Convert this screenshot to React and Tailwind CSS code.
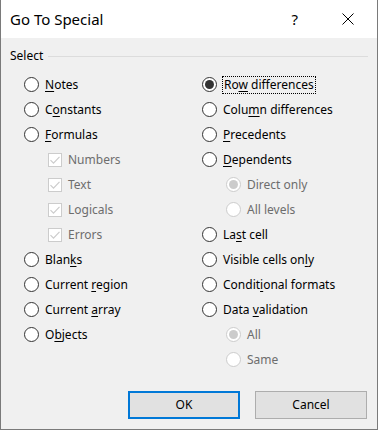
import React from "react";

function Radio({ checked, disabled }) {
  return (
    <span
      className={
        disabled
          ? "flex items-center justify-center w-[15px] h-[15px] rounded-full border border-[#cccccc] bg-white shrink-0"
          : "flex items-center justify-center w-[15px] h-[15px] rounded-full border border-[#333333] bg-white shrink-0"
      }
    >
      {checked && (
        <span
          className={
            disabled
              ? "w-[9px] h-[9px] rounded-full bg-[#cccccc]"
              : "w-[9px] h-[9px] rounded-full bg-[#333333]"
          }
        />
      )}
    </span>
  );
}

function Check() {
  return (
    <span className="flex items-center justify-center w-[14px] h-[14px] border border-[#cccccc] bg-white shrink-0">
      <svg width="12" height="12" viewBox="0 0 12 12">
        <path d="M1.5 6.2 L4.5 9.2 L10.5 2.8" fill="none" stroke="#cccccc" strokeWidth="1.2" />
      </svg>
    </span>
  );
}

function Label({ text, u }) {
  if (u == null) return <span>{text}</span>;
  return (
    <span>
      {text.slice(0, u)}
      <span className="underline decoration-1 underline-offset-[2px]">{text[u]}</span>
      {text.slice(u + 1)}
    </span>
  );
}

function RadioRow({ text, u, checked, disabled, indent, focus }) {
  return (
    <div className={indent ? "flex items-center h-[25px] pl-[24px]" : "flex items-center h-[25px]"}>
      <Radio checked={checked} disabled={disabled} />
      <span
        className={
          focus
            ? "ml-[5px] px-[1px] border border-dotted border-black leading-[16px]"
            : disabled
            ? "ml-[6px] text-[#6d6d6d] leading-[16px]"
            : "ml-[6px] leading-[16px]"
        }
      >
        <Label text={text} u={u} />
      </span>
    </div>
  );
}

function CheckRow({ text }) {
  return (
    <div className="flex items-center h-[25px] pl-[24px]">
      <Check />
      <span className="ml-[6px] text-[#6d6d6d] leading-[16px]">{text}</span>
    </div>
  );
}

export default function App() {
  return (
    <div className="w-[378px] h-[430px] flex flex-col border-l border-r border-b border-[#7a7a7a] font-['Noto_Sans',sans-serif] text-[12px] text-black bg-[#f0f0f0] box-border">
      <div className="h-[38px] bg-white flex items-center shrink-0">
        <span className="pl-[9px] text-[15px] leading-[20px]">Go To Special</span>
        <span className="ml-auto text-[15px] leading-[20px] mr-[44px]">?</span>
        <svg width="12" height="12" viewBox="0 0 12 12" className="mr-[23px]">
          <path d="M0.5 0.5 L11.5 11.5 M11.5 0.5 L0.5 11.5" stroke="#000" strokeWidth="1" />
        </svg>
      </div>
      <div className="flex-1 flex flex-col">
        <div className="flex items-center h-[16px] mt-[10px] pl-[9px] pr-[9px]">
          <span className="leading-[16px]">Select</span>
          <span className="flex-1 h-px bg-[#dcdcdc] ml-[5px]" />
        </div>
        <div className="flex mt-[8px] pl-[23px]">
          <div className="w-[178px] flex flex-col">
            <RadioRow text="Notes" u={0} />
            <RadioRow text="Constants" u={1} />
            <RadioRow text="Formulas" u={0} />
            <CheckRow text="Numbers" />
            <CheckRow text="Text" />
            <CheckRow text="Logicals" />
            <CheckRow text="Errors" />
            <RadioRow text="Blanks" u={4} />
            <RadioRow text="Current region" u={8} />
            <RadioRow text="Current array" u={8} />
            <RadioRow text="Objects" u={1} />
          </div>
          <div className="flex flex-col">
            <RadioRow text="Row differences" u={2} checked focus />
            <RadioRow text="Column differences" u={4} />
            <RadioRow text="Precedents" u={0} />
            <RadioRow text="Dependents" u={0} />
            <RadioRow text="Direct only" checked disabled indent />
            <RadioRow text="All levels" disabled indent />
            <RadioRow text="Last cell" u={2} />
            <RadioRow text="Visible cells only" u={16} />
            <RadioRow text="Conditional formats" u={6} />
            <RadioRow text="Data validation" u={5} />
            <RadioRow text="All" checked disabled indent />
            <RadioRow text="Same" disabled indent />
          </div>
        </div>
        <div className="flex justify-end gap-[15px] pr-[10px] mt-[19px]">
          <button className="w-[112px] h-[28px] bg-[#e1e1e1] border-2 border-[#0078d7] leading-[16px]">OK</button>
          <button className="w-[112px] h-[28px] bg-[#e1e1e1] border border-[#adadad] leading-[16px]">Cancel</button>
        </div>
      </div>
    </div>
  );
}
